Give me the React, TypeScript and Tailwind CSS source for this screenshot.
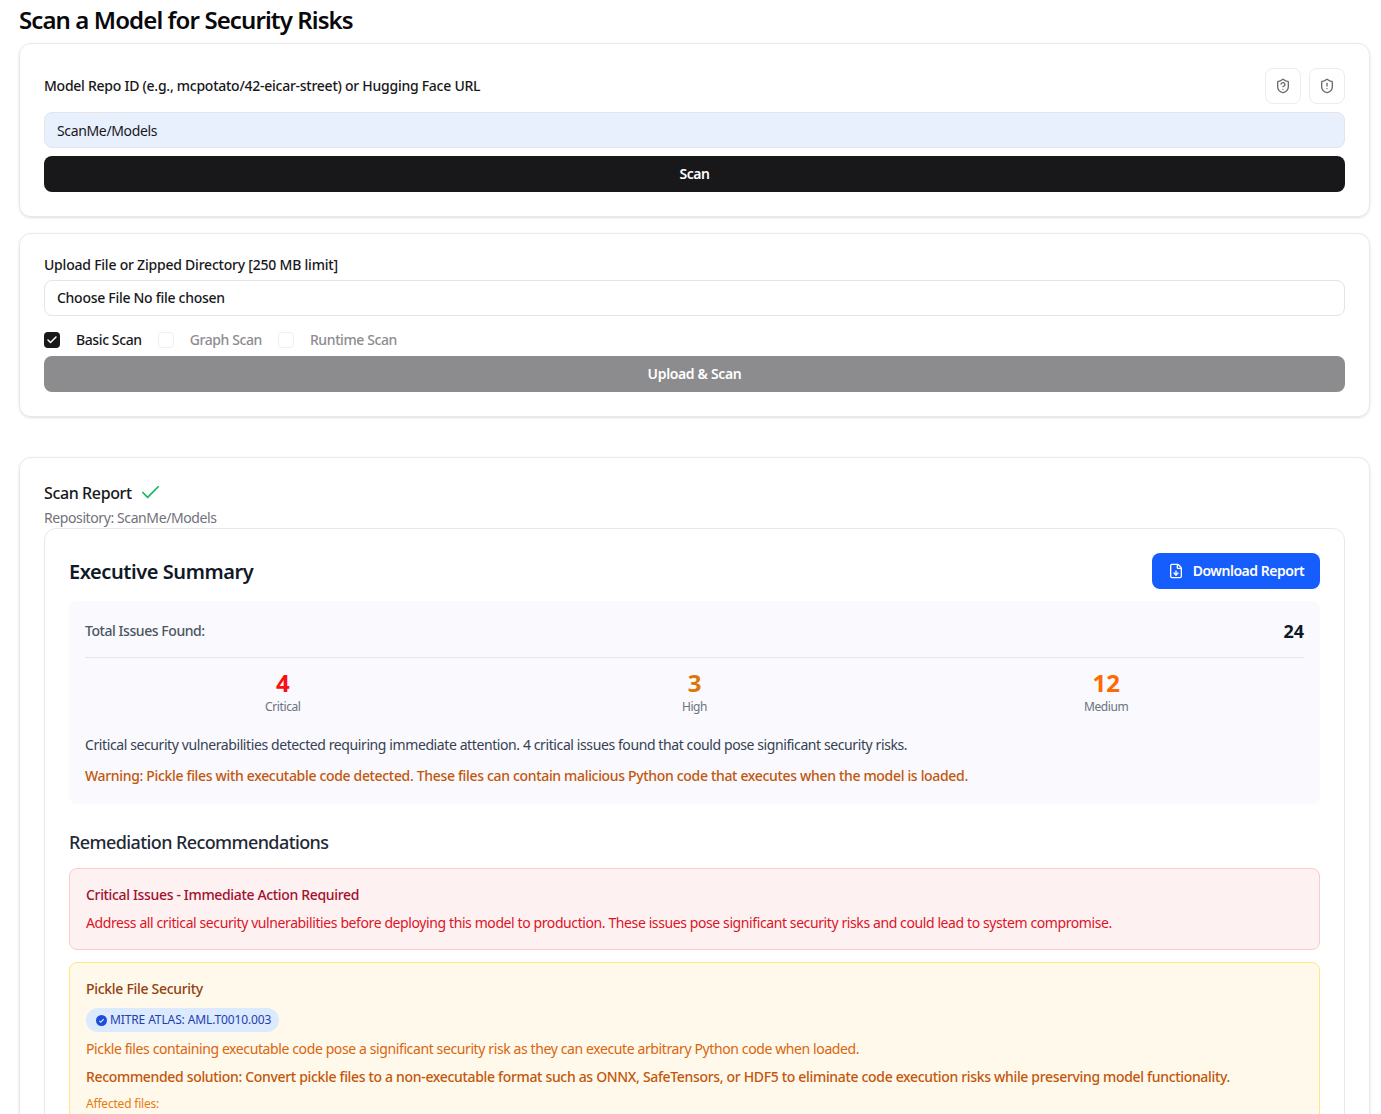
import { Check, FileDown, ShieldAlert, ShieldQuestion } from 'lucide-react';

const FONT = "[font-family:'Noto_Sans','Open_Sans',sans-serif]";

function SeverityCount({ count, label, color }: { count: number; label: string; color: string }) {
  return (
    <div className="flex flex-col items-center">
      <span className={`text-2xl leading-[30px] font-bold tracking-normal ${color}`}>{count}</span>
      <span className="text-xs leading-[16px] mt-px tracking-[-0.4px] text-[#6b7280]">{label}</span>
    </div>
  );
}

export default function App() {
  return (
    <div className={`${FONT} h-[1114px] overflow-hidden bg-white pl-[19px] pr-[11px] text-[#18181b] text-sm tracking-[-0.4px]`}>
      <h1 className="text-2xl leading-[32px] font-semibold tracking-[-0.9px] text-[#09090b] pt-[4px] mb-[7px]">Scan a Model for Security Risks</h1>

      {/* Repo scan */}
      <div className="h-[174px] rounded-xl border border-[#e9e7ec] shadow-sm px-6 pt-6">
        <div className="flex items-center justify-between h-9 mb-2">
          <label className="font-medium tracking-[-0.26px]">Model Repo ID (e.g., mcpotato/42-eicar-street) or Hugging Face URL</label>
          <div className="flex gap-2">
            <button className="w-9 h-9 flex items-center justify-center rounded-lg border border-[#ececf0]">
              <ShieldQuestion className="w-4 h-4 text-[#6b6b70]" />
            </button>
            <button className="w-9 h-9 flex items-center justify-center rounded-lg border border-[#ececf0]">
              <ShieldAlert className="w-4 h-4 text-[#6b6b70]" />
            </button>
          </div>
        </div>
        <div className="h-9 rounded-lg border border-[#e4e4ea] bg-[#e8f0fe] px-3 pt-px flex items-center tracking-[-0.35px]">ScanMe/Models</div>
        <button className="mt-2 w-full h-9 rounded-lg bg-[#18181b] text-white font-semibold tracking-[-0.5px]">Scan</button>
      </div>

      {/* Upload */}
      <div className="mt-4 h-[184px] rounded-xl border border-[#e9e7ec] shadow-sm px-6 pt-[21px]">
        <label className="block font-medium leading-[20px] mb-[5px] tracking-[-0.22px]">Upload File or Zipped Directory [250 MB limit]</label>
        <div className="h-9 rounded-lg border border-[#e4e4e7] px-3 flex items-center font-medium tracking-[-0.28px]">Choose File No file chosen</div>
        <div className="flex items-center h-6 mt-3 font-medium">
          <span className="w-4 h-4 rounded bg-[#18181b] flex items-center justify-center">
            <Check className="w-3 h-3 text-white" strokeWidth={3} />
          </span>
          <span className="ml-4">Basic Scan</span>
          <span className="w-4 h-4 ml-4 rounded border border-[#f0eff2]" />
          <span className="ml-4 text-[#8c8c90]">Graph Scan</span>
          <span className="w-4 h-4 ml-4 rounded border border-[#f0eff2]" />
          <span className="ml-4 text-[#8c8c90]">Runtime Scan</span>
        </div>
        <button className="mt-1 w-full h-9 rounded-lg bg-[#8c8b8d] text-white font-semibold tracking-[-0.35px]">Upload &amp; Scan</button>
      </div>

      {/* Report */}
      <div className="mt-10 rounded-xl border border-[#e9e7ec] shadow-sm px-6 pt-6 pb-6">
        <div className="flex items-center gap-[7px] h-5 pt-px text-base font-medium tracking-[-0.38px]">
          Scan Report
          <Check className="w-[23px] h-[23px] text-[#12b85f]" strokeWidth={1.75} />
        </div>
        <p className="mt-[6px] leading-[20px] text-[#71717a]">Repository: ScanMe/Models</p>
        <div className="rounded-xl border border-[#e9e7ec] px-6 pt-6 pb-6">
          <div className="flex items-center justify-between h-9 mb-3">
            <h2 className="pt-[2px] text-xl font-semibold tracking-[-0.43px] text-[#111827]">Executive Summary</h2>
            <button className="h-9 w-[168px] rounded-lg bg-[#155dfc] text-white font-semibold tracking-[-0.47px] flex items-center justify-center gap-[9px]">
              <FileDown className="w-4 h-4" />
              Download Report
            </button>
          </div>

          <div className="rounded-lg bg-[#f9f9fe] px-4 pt-4 pb-[18px]">
            <div className="flex items-center justify-between h-7">
              <span className="font-medium tracking-[-0.44px] text-[#4b5563]">Total Issues Found:</span>
              <span className="text-lg font-bold tracking-normal text-[#111827]">24</span>
            </div>
            <div className="h-px bg-[#e5e7eb] mt-[12px] mb-[10px]" />
            <div className="grid grid-cols-3 gap-4">
              <SeverityCount count={4} label="Critical" color="text-[#fb0f0f]" />
              <SeverityCount count={3} label="High" color="text-[#dc7607]" />
              <SeverityCount count={12} label="Medium" color="text-[#ff6900]" />
            </div>
            <p className="mt-[20px] leading-[20px] text-[#374151]">Critical security vulnerabilities detected requiring immediate attention. 4 critical issues found that could pose significant security risks.</p>
            <p className="mt-[11px] leading-[20px] font-medium tracking-[-0.33px] text-[#c2570c]">Warning: Pickle files with executable code detected. These files can contain malicious Python code that executes when the model is loaded.</p>
          </div>

          <h3 className="mt-[26px] text-lg leading-[24px] font-medium tracking-[-0.6px] text-[#1f2937]">Remediation Recommendations</h3>

          <div className="mt-[14px] h-[82px] rounded-lg border border-[#ffc9c9] bg-[#fef1f2] px-4 pt-4">
            <p className="leading-[20px] font-medium tracking-[-0.34px] text-[#a30f2d]">Critical Issues - Immediate Action Required</p>
            <p className="mt-2 leading-[20px] text-[#dc1426]">Address all critical security vulnerabilities before deploying this model to production. These issues pose significant security risks and could lead to system compromise.</p>
          </div>

          <div className="mt-3 rounded-lg border border-[#fee685] bg-[#fff9eb] px-4 pt-4 pb-4">
            <p className="leading-[20px] font-medium tracking-[-0.3px] text-[#92400e]">Pickle File Security</p>
            <span className="mt-[9px] inline-flex items-center gap-[3px] h-6 rounded-full bg-[#dbeafe] pl-[10px] pr-2 text-xs tracking-[-0.12px] text-[#1e40af]">
              <svg viewBox="0 0 12 12" className="w-[11px] h-[11px]">
                <circle cx="6" cy="6" r="6" fill="#1d4ed8" />
                <path d="M3.6 6.4 5.2 7.8 8.4 4.6" fill="none" stroke="#dbeafe" strokeWidth="1.2" />
              </svg>
              MITRE ATLAS: AML.T0010.003
            </span>
            <p className="mt-[7px] leading-[20px] tracking-[-0.39px] text-[#d9650f]">Pickle files containing executable code pose a significant security risk as they can execute arbitrary Python code when loaded.</p>
            <p className="mt-2 leading-[20px] font-medium tracking-[-0.33px] text-[#c2570c]">Recommended solution: Convert pickle files to a non-executable format such as ONNX, SafeTensors, or HDF5 to eliminate code execution risks while preserving model functionality.</p>
            <p className="mt-[9px] text-xs leading-[16px] tracking-[-0.2px] text-[#ea7a0c]">Affected files:</p>
          </div>
        </div>
      </div>
    </div>
  );
}
